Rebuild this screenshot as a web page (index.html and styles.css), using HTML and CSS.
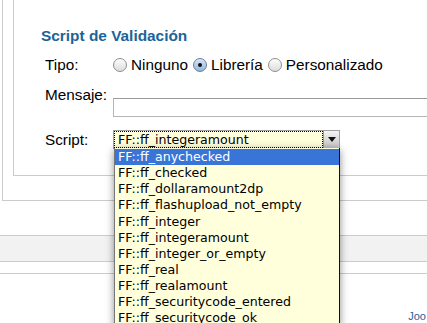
FILE: index.html
```html
<!DOCTYPE html>
<html>
<head>
<meta charset="utf-8">
<link rel="stylesheet" href="styles.css">
</head>
<body>
<div class="page">
  <div class="outer">
    <div class="inner">
      <h3 class="title">Script de Validación</h3>
      <div class="row row-tipo">
        <span class="label">Tipo:</span>
        <span class="radio"></span><span class="opt">Ninguno</span>
        <span class="radio checked"></span><span class="opt">Librería</span>
        <span class="radio"></span><span class="opt">Personalizado</span>
      </div>
      <div class="row row-msg">
        <span class="label">Mensaje:</span>
        <span class="textinput"></span>
      </div>
      <div class="row row-script">
        <span class="label">Script:</span>
        <span class="select"><span class="select-text">FF::ff_integeramount</span><span class="select-btn"><span class="arrow"></span></span></span>
      </div>
    </div>
  </div>
  <div class="band"></div>
  <div class="rule"></div>
  <div class="footer"><span class="footlink">Joo</span></div>

  <ul class="dropdown">
    <li class="sel">FF::ff_anychecked</li>
    <li>FF::ff_checked</li>
    <li>FF::ff_dollaramount2dp</li>
    <li>FF::ff_flashupload_not_empty</li>
    <li>FF::ff_integer</li>
    <li>FF::ff_integeramount</li>
    <li>FF::ff_integer_or_empty</li>
    <li>FF::ff_real</li>
    <li>FF::ff_realamount</li>
    <li>FF::ff_securitycode_entered</li>
    <li>FF::ff_securitycode_ok</li>
  </ul>
</div>
</body>
</html>
```
FILE: styles.css
```css
html, body {
  margin: 0;
  padding: 0;
  background: #fff;
  overflow: hidden;
}
.page {
  position: relative;
  width: 427px;
  height: 323px;
  overflow: hidden;
  font-family: "Liberation Sans", Arial, sans-serif;
  color: #000;
}
.outer {
  margin-left: 2px;
  width: 600px;
  height: 201px;
  box-sizing: border-box;
  border-left: 1px solid #cbcbcb;
  border-bottom: 1px solid #cbcbcb;
}
.inner {
  margin-left: 10px;
  height: 176px;
  box-sizing: border-box;
  border-left: 1px solid #cbcbcb;
  border-bottom: 1px solid #cbcbcb;
  padding-left: 27px;
  padding-top: 27px;
}
.title {
  margin: 0;
  font-size: 15.4px;
  line-height: 18px;
  font-weight: bold;
  color: #1b6497;
}
.row {
  display: flex;
  font-size: 15.3px;
  line-height: 18px;
  padding-left: 4px;
}
.label {
  width: 68px;
  flex: none;
}
.row-tipo {
  margin-top: 11px;
  align-items: center;
}
.radio {
  width: 12px;
  height: 12px;
  border: 1px solid #8e8e8e;
  border-radius: 50%;
  background: linear-gradient(#fdfdfd, #dcdcdc);
  box-sizing: content-box;
  margin-right: 4px;
  margin-top: -1px;
  flex: none;
  position: relative;
}
.radio.checked {
  border-color: #6d7f96;
  background: linear-gradient(#d5e6f7, #93b7de);
}
.radio.checked::after {
  content: "";
  position: absolute;
  left: 4px;
  top: 4px;
  width: 4px;
  height: 4px;
  border-radius: 50%;
  background: #111;
}
.opt {
  margin-right: 5px;
}
.row-msg {
  margin-top: 12px;
  align-items: flex-start;
}
.textinput {
  display: block;
  margin-top: 12px;
  width: 400px;
  height: 17px;
  border: 1px solid #b5b5b5;
  border-top-color: #9a9a9a;
  background: #fff;
}
.row-script {
  margin-top: 14px;
  align-items: center;
}
.select {
  display: flex;
  width: 227px;
  height: 19px;
  box-sizing: border-box;
  border: 1px solid #a0a0a0;
  background: #ffffdc;
  margin-top: -2px;
}
.select-text {
  flex: 1;
  border: 1px dotted #000;
  font-family: "DejaVu Sans", Verdana, sans-serif;
  font-size: 12.6px;
  line-height: 15px;
  padding-left: 3px;
  color: #000;
}
.select-btn {
  width: 15px;
  flex: none;
  background: linear-gradient(#f4f4f4, #c4c4c4);
  border-left: 1px solid #9a9a9a;
  display: flex;
  align-items: center;
  justify-content: center;
}
.arrow {
  width: 0;
  height: 0;
  border-left: 4px solid transparent;
  border-right: 4px solid transparent;
  border-top: 5px solid #111;
}
.band {
  margin-top: 34px;
  height: 25px;
  border-top: 1px solid #cccccc;
  border-bottom: 1px solid #cccccc;
  background: #f2f2f2;
}
.rule {
  margin-top: 11px;
  border-top: 1px solid #cccccc;
}
.footer {
  display: flex;
  justify-content: flex-end;
  padding-top: 36px;
}
.footlink {
  font-size: 11px;
  line-height: 13px;
  color: #1f5f9a;
  margin-right: 1px;
}
.dropdown {
  position: absolute;
  left: 114px;
  top: 148px;
  width: 226px;
  margin: 0;
  padding: 1px 0 0 0;
  list-style: none;
  box-sizing: border-box;
  background: #ffffdc;
  border-left: 1px solid #777;
  border-right: 1px solid #111;
  box-shadow: 0 2px 8px rgba(0, 0, 0, 0.45);
  font-family: "DejaVu Sans", Verdana, sans-serif;
  font-size: 12.6px;
}
.dropdown li {
  height: 16.13px;
  line-height: 16px;
  padding-left: 3px;
  white-space: nowrap;
}
.dropdown li.sel {
  background: #3875d7;
  color: #fff;
}
```
